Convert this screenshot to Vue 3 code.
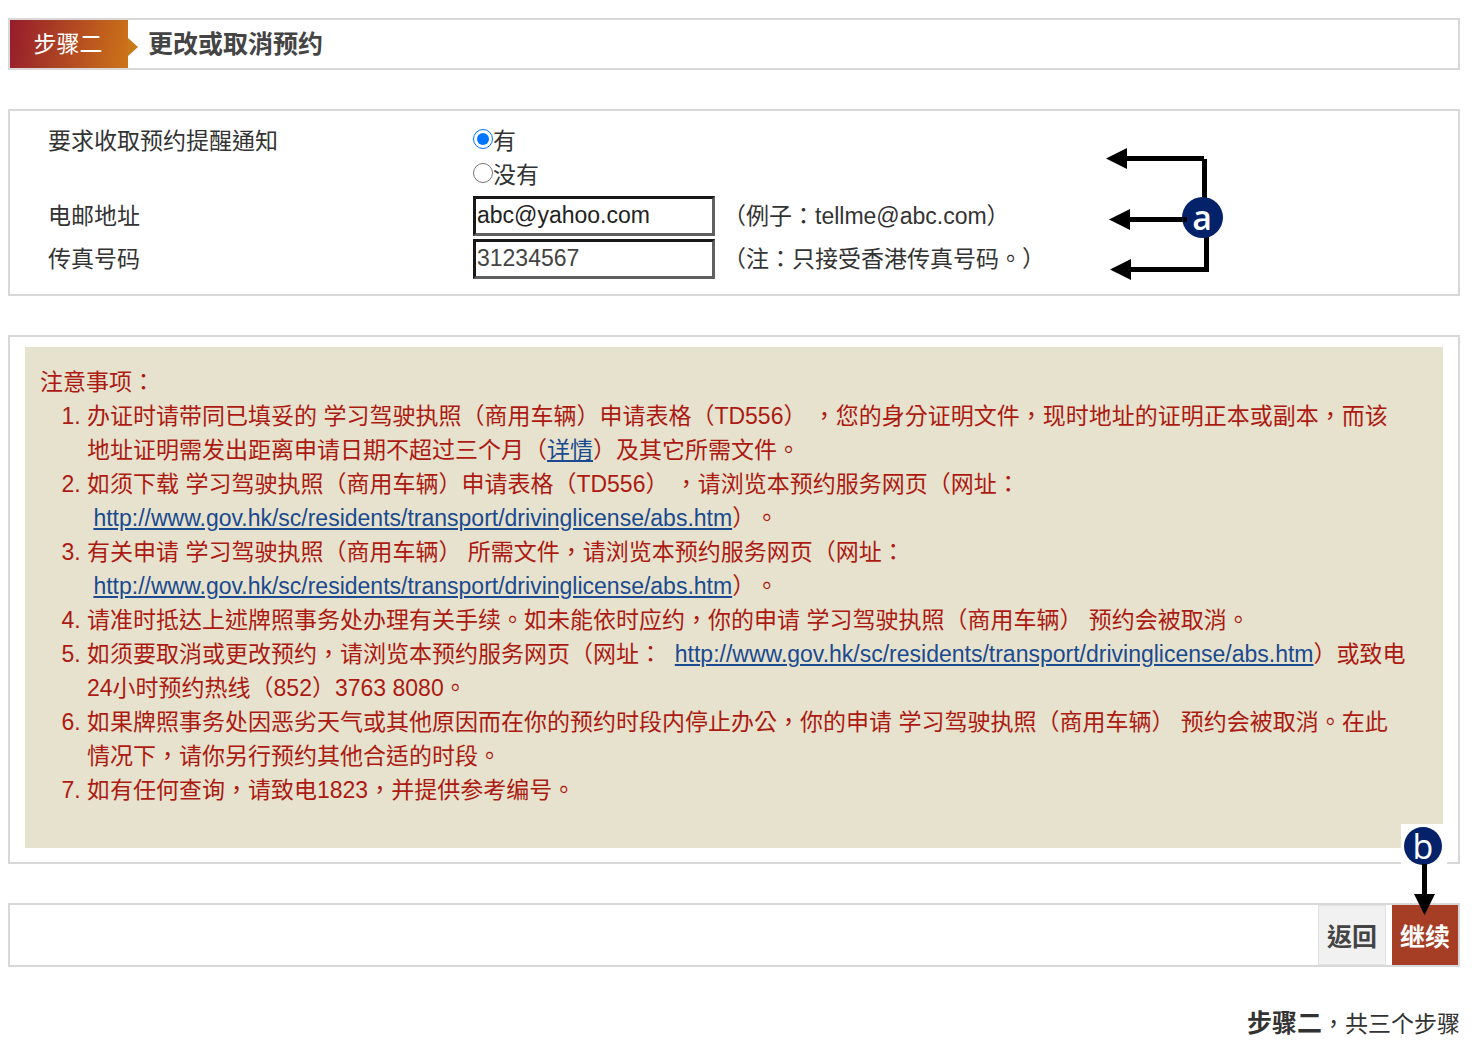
<script setup>
import { ref } from 'vue'

const reminder = ref('yes')
const email = ref('abc@yahoo.com')
const fax = ref('31234567')
const serviceUrl = 'http://www.gov.hk/sc/residents/transport/drivinglicense/abs.htm'
</script>

<template>
  <main class="page">
    <header class="panel step">
      <div class="step-tab">步骤二</div>
      <h1 class="step-title">更改或取消预约</h1>
    </header>

    <form id="reminder-form" class="panel form" @submit.prevent>
      <div class="row" role="radiogroup" aria-labelledby="reminder-label">
        <span id="reminder-label">要求收取预约提醒通知</span>
        <div class="options">
          <label class="option"><input v-model="reminder" type="radio" name="reminder" value="yes" />有</label>
          <label class="option"><input v-model="reminder" type="radio" name="reminder" value="no" />没有</label>
        </div>
      </div>
      <div class="row field">
        <label for="email">电邮地址</label>
        <div class="entry">
          <input id="email" v-model="email" class="text" type="text" />
          <span>（例子：tellme@abc.com）</span>
        </div>
      </div>
      <div class="row field">
        <label for="fax">传真号码</label>
        <div class="entry">
          <input id="fax" v-model="fax" class="text fax" type="text" />
          <span>（注：只接受香港传真号码。）</span>
        </div>
      </div>

      <svg class="callout callout-a" width="120" height="136" viewBox="0 0 120 136">
        <g fill="none" stroke="#000" stroke-width="5">
          <path d="M20 13.5H99" />
          <path d="M99.5 14V56" />
          <path d="M22 74.5H88" />
          <path d="M101.5 90V124.5H24" />
        </g>
        <path d="M1 13.5 22 3V24ZM4 74.5 25 64V85ZM5 124.5 26 114V135Z" />
        <circle cx="97.5" cy="72.5" r="20.5" fill="#04226a" />
        <path d="M78 74.5H82" stroke="#000" stroke-width="5" />
        <text x="97" y="85" text-anchor="middle" font-size="34" font-weight="600" fill="#fff">a</text>
      </svg>
    </form>

    <section class="panel notice">
      <div class="notice-body">
        <p>注意事项：</p>
        <ol>
          <li>办证时请带同已填妥的 学习驾驶执照（商用车辆）申请表格（TD556） ，您的身分证明文件，现时地址的证明正本或副本，而该地址证明需发出距离申请日期不超过三个月（<a href="#details">详情</a>）及其它所需文件。</li>
          <li>如须下载 学习驾驶执照（商用车辆）申请表格（TD556） ，请浏览本预约服务网页（网址： &nbsp;<a :href="serviceUrl">{{ serviceUrl }}</a>）。</li>
          <li>有关申请 学习驾驶执照（商用车辆） 所需文件，请浏览本预约服务网页（网址： &nbsp;<a :href="serviceUrl">{{ serviceUrl }}</a>）。</li>
          <li>请准时抵达上述牌照事务处办理有关手续。如未能依时应约，你的申请 学习驾驶执照（商用车辆） 预约会被取消。</li>
          <li>如须要取消或更改预约，请浏览本预约服务网页（网址： &nbsp;<a :href="serviceUrl">{{ serviceUrl }}</a>）或致电24小时预约热线（852）3763 8080。</li>
          <li>如果牌照事务处因恶劣天气或其他原因而在你的预约时段内停止办公，你的申请 学习驾驶执照（商用车辆） 预约会被取消。在此情况下，请你另行预约其他合适的时段。</li>
          <li>如有任何查询，请致电1823，并提供参考编号。</li>
        </ol>
      </div>
    </section>

    <div class="panel actions">
      <button type="button" class="back">返回</button>
      <button type="submit" form="reminder-form" class="next">继续</button>

      <svg class="callout callout-b" width="46" height="92" viewBox="0 0 46 92">
        <path fill="#fff" d="M0 0H46V42H0Z" />
        <circle cx="22" cy="22" r="19" fill="#04226a" />
        <text x="22" y="35" text-anchor="middle" font-size="34" font-weight="500" fill="#fff">b</text>
        <path d="M21 40H26V70H34L23.5 91 13 70H21Z" />
      </svg>
    </div>

    <p class="progress"><strong>步骤二</strong>，共三个步骤</p>
  </main>
</template>

<style>
body {
  margin: 0;
  background: #fff;
}
</style>

<style scoped>
.page {
  display: flex;
  flex-direction: column;
  gap: 39px;
  padding: 18px 15px 11px 8px;
  color: #333;
  font-family: "Liberation Sans", "Noto Sans CJK TC", sans-serif;
  font-size: 23px;
  line-height: 34px;
  text-spacing-trim: space-all;
}

.panel {
  position: relative;
  border: 2px solid #d8d8d8;
}

.step {
  display: flex;
  align-items: stretch;
  height: 48px;
}

.step-tab {
  position: relative;
  display: flex;
  align-items: center;
  justify-content: center;
  width: 118px;
  padding-right: 2px;
  box-sizing: border-box;
  background: linear-gradient(100deg, #951c2c, #cd7418);
  color: #fff;
}

.step-tab::after {
  content: "";
  position: absolute;
  top: 18px;
  left: 100%;
  border: 9px solid transparent;
  border-left: 10px solid #c9781c;
  border-right: 0;
}

.step-title {
  margin: 0;
  padding-left: 20px;
  color: #444;
  font-size: 25px;
  font-weight: 700;
  line-height: 48px;
}

.form {
  padding: 13px 38px 14px;
}

.row {
  display: grid;
  grid-template-columns: 424px 1fr;
}

.field {
  align-items: center;
  height: 43px;
}

.options {
  display: flex;
  flex-direction: column;
  padding-bottom: 2px;
}

.option {
  display: flex;
  align-items: center;
}

.option input {
  width: 20px;
  height: 20px;
  margin: 0 0 4px 1px;
  accent-color: #0075ff;
}

.entry {
  display: flex;
  align-items: center;
  gap: 8px;
}

.text {
  box-sizing: border-box;
  width: 242px;
  height: 40px;
  margin: 0 0 0 1px;
  padding: 0 1px;
  border: 3px solid;
  border-color: #181818 #606060 #606060 #181818;
  border-radius: 0;
  background: #fff;
  color: #222;
  font-family: inherit;
  font-size: 23px;
}

.fax {
  color: #444;
}

.callout {
  position: absolute;
  overflow: visible;
  font-family: "Open Sans", "Noto Sans", sans-serif;
  pointer-events: none;
}

.callout-a {
  top: 34px;
  left: 1095px;
}

.callout-b {
  top: -81px;
  right: 11px;
}

.notice {
  padding: 10px 15px 14px;
}

.notice-body {
  padding: 18px 36px 41px 15px;
  background: #e6e2cd;
  color: #ac1a12;
}

.notice-body p,
.progress {
  margin: 0;
}

.notice-body ol {
  margin: 0;
  padding-left: 47px;
}

.notice-body a {
  color: #1a4a90;
  white-space: nowrap;
  text-decoration: underline;
}

.actions {
  display: flex;
  justify-content: flex-end;
  gap: 6px;
  height: 60px;
}

.actions button {
  margin: 0;
  padding: 0 8px;
  border: 0;
  font-family: inherit;
  font-size: 25px;
  font-weight: 700;
}

.actions .back {
  border: 1px solid #e2e2e2;
  background: #f1f1f1;
  color: #444;
}

.actions .next {
  background: #a63e26;
  color: #fff;
}

.progress {
  text-align: right;
}

.progress strong {
  font-size: 25px;
}
</style>
